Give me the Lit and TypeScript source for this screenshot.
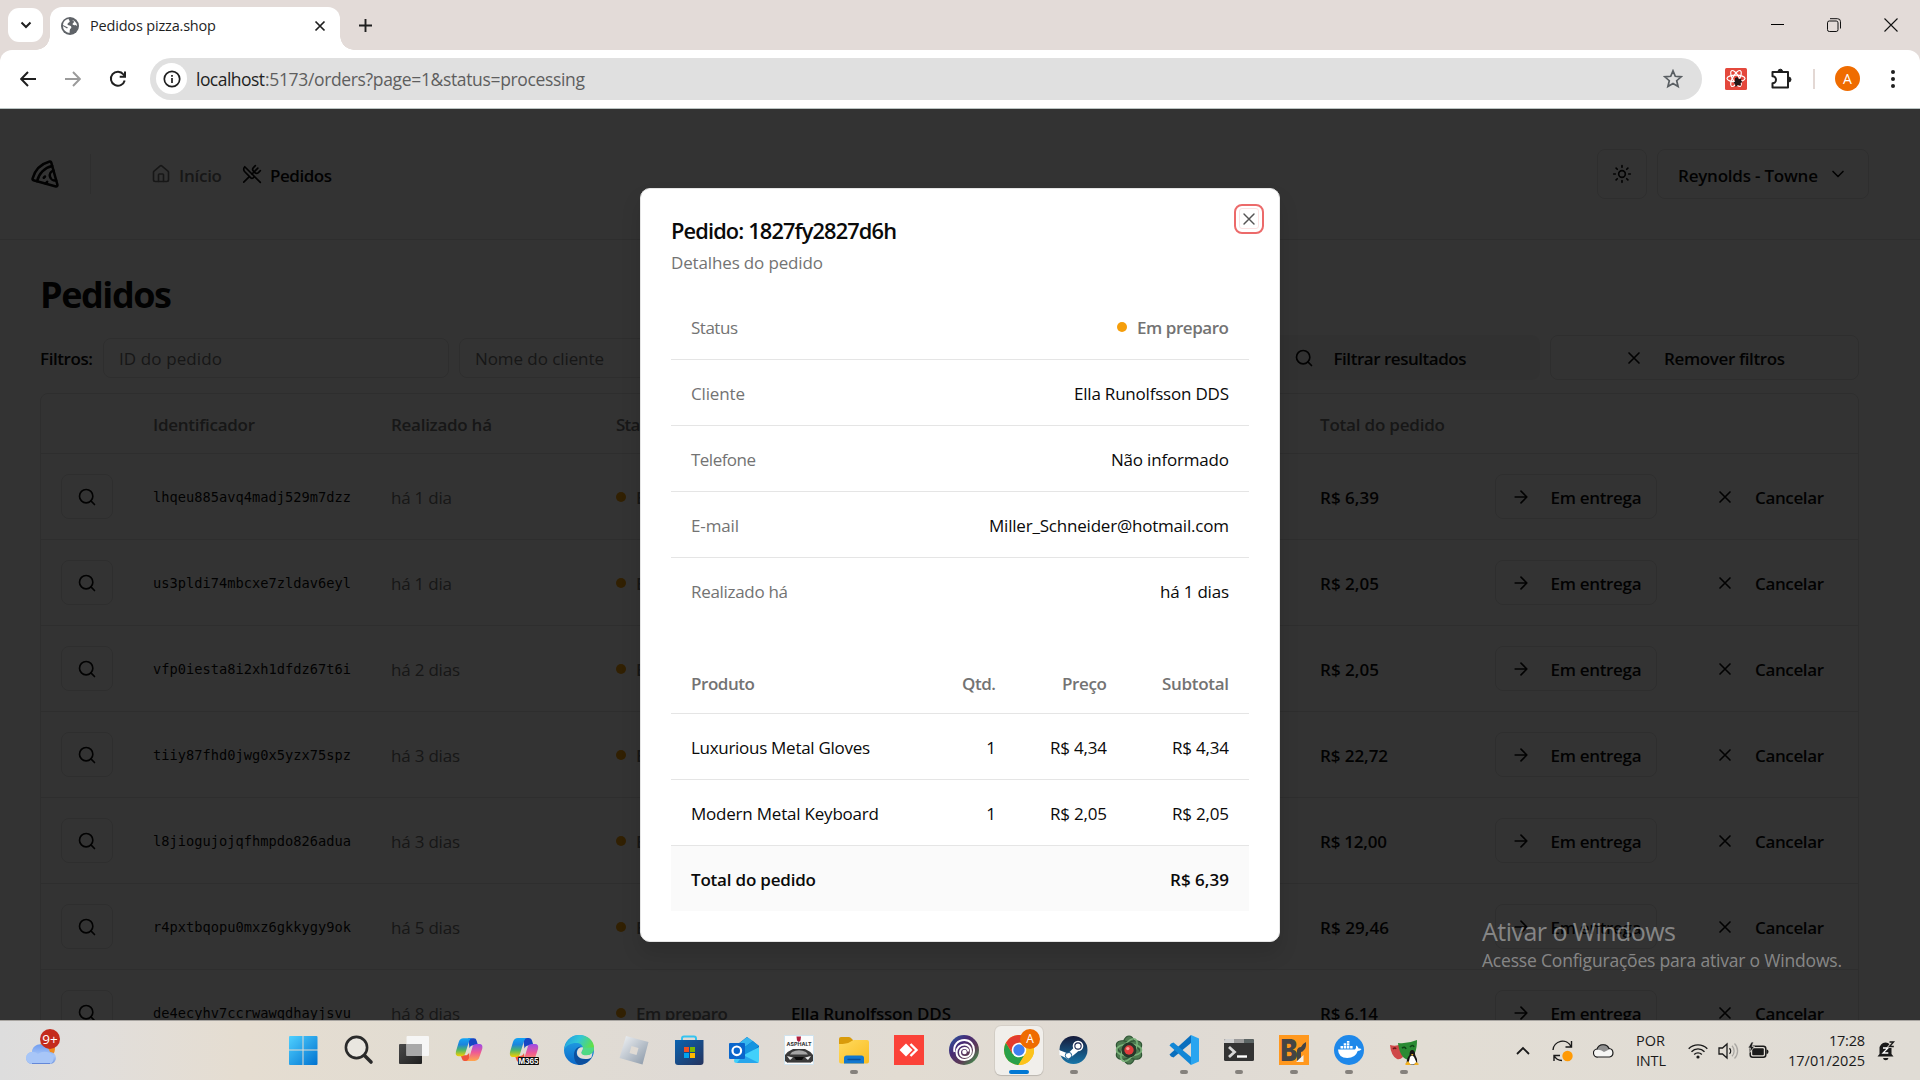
import { LitElement, html, css, svg, nothing } from "lit";
import type { TemplateResult } from "lit";
import { customElement, property, query } from "lit/decorators.js";

/** A line of text tracked so that it fills exactly `w` pixels. */
@customElement("fit-text")
class FitText extends LitElement {
  static styles = css`
    :host { display: inline-block; white-space: nowrap; padding-top: 1px; flex: none; }
  `;
  @property({ type: Number }) w = 0;
  @query("span") private line!: HTMLSpanElement;
  firstUpdated() {
    const n = (this.textContent ?? "").trim().length;
    const natural = this.line.getBoundingClientRect().width;
    if (this.w && n > 1) {
      this.line.style.letterSpacing = `${(this.w - natural) / (n - 1)}px`;
      this.style.width = `${this.w}px`;
    }
  }
  render() { return html`<span><slot></slot></span>`; }
}

const fit = (text: string, w: number, cls = "") => html`<fit-text class=${cls} .w=${w}>${text}</fit-text>`;

const lucide = (body: TemplateResult, size = 20, sw = 2) => html`<svg class="ic" width=${size} height=${size} viewBox="0 0 24 24" fill="none" stroke="currentColor" stroke-width=${sw} stroke-linecap="round" stroke-linejoin="round">${body}</svg>`;

const I = {
  pizza: svg`<path d="m12 14-1 1"/><path d="m13.75 18.25-1.25 1.42"/><path d="M17.775 5.654a15.68 15.68 0 0 0-12.121 12.12"/><path d="M18.8 9.3a1 1 0 0 0 2.1 7.7"/><path d="M21.964 20.732a1 1 0 0 1-1.232 1.232l-18-5a1 1 0 0 1-.695-1.232A19.68 19.68 0 0 1 15.732 2.037a1 1 0 0 1 1.232.695z"/>`,
  home: svg`<path d="M15 21v-8a1 1 0 0 0-1-1h-4a1 1 0 0 0-1 1v8"/><path d="M3 10a2 2 0 0 1 .709-1.528l7-5.999a2 2 0 0 1 2.582 0l7 5.999A2 2 0 0 1 21 10v9a2 2 0 0 1-2 2H5a2 2 0 0 1-2-2z"/>`,
  utensils: svg`<path d="m16 2-2.3 2.3a3 3 0 0 0 0 4.2l1.8 1.8a3 3 0 0 0 4.2 0L22 8"/><path d="M15 15 3.3 3.3a4.2 4.2 0 0 0 0 6l7.3 7.3c.7.7 2 .7 2.8 0L15 15Zm0 0 7 7"/><path d="m2.1 21.8 6.4-6.3"/><path d="m19 5-7 7"/>`,
  sun: svg`<circle cx="12" cy="12" r="4"/><path d="M12 2v2M12 20v2M4.93 4.93l1.41 1.41M17.66 17.66l1.41 1.41M2 12h2M20 12h2M6.34 17.66l-1.41 1.41M19.07 4.93l-1.41 1.41"/>`,
  down: svg`<path d="m6 9 6 6 6-6"/>`,
  search: svg`<circle cx="11" cy="11" r="8"/><path d="m21 21-4.3-4.3"/>`,
  x: svg`<path d="M18 6 6 18M6 6l12 12"/>`,
  arrow: svg`<path d="M5 12h14M12 5l7 7-7 7"/>`,
};

interface Order { id: string; ago: string; agoW: number; total: string; totalW: number }
const orders: Order[] = [
  { id: "lhqeu885avq4madj529m7dzz", ago: "há 1 dia", agoW: 61, total: "R$ 6,39", totalW: 59 },
  { id: "us3pldi74mbcxe7zldav6eyl", ago: "há 1 dia", agoW: 61, total: "R$ 2,05", totalW: 59 },
  { id: "vfp0iesta8i2xh1dfdz67t6i", ago: "há 2 dias", agoW: 69, total: "R$ 2,05", totalW: 59 },
  { id: "tiiy87fhd0jwg0x5yzx75spz", ago: "há 3 dias", agoW: 69, total: "R$ 22,72", totalW: 68 },
  { id: "l8jiogujojqfhmpdo826adua", ago: "há 3 dias", agoW: 69, total: "R$ 12,00", totalW: 67 },
  { id: "r4pxtbqopu0mxz6gkkygy9ok", ago: "há 5 dias", agoW: 69, total: "R$ 29,46", totalW: 69 },
  { id: "de4ecyhv7ccrwawqdhayjsvu", ago: "há 8 dias", agoW: 69, total: "R$ 6,14", totalW: 58 },
];

const details: [string, number, string, number][] = [
  ["Cliente", 54, "Ella Runolfsson DDS", 155],
  ["Telefone", 65, "Não informado", 118],
  ["E-mail", 48, "Miller_Schneider@hotmail.com", 240],
  ["Realizado há", 97, "há 1 dias", 69],
];
const products: [string, number, string][] = [
  ["Luxurious Metal Gloves", 179, "R$ 4,34"],
  ["Modern Metal Keyboard", 188, "R$ 2,05"],
];

const copilot = (id: string) => svg`
  <defs>
    <linearGradient id="${id}a" x1="0" y1="0" x2="0" y2="1"><stop offset="0" stop-color="#12a5f5"/><stop offset=".35" stop-color="#1c84dc"/><stop offset=".65" stop-color="#4fb568"/><stop offset="1" stop-color="#f5d000"/></linearGradient>
    <linearGradient id="${id}b" x1="0" y1="0" x2="0" y2="1"><stop offset="0" stop-color="#9a4be8"/><stop offset=".5" stop-color="#ee5a94"/><stop offset="1" stop-color="#ffa64d"/></linearGradient>
  </defs>
  <path d="M14 3h6q2.500 0 3 2.500l1.500 5h-5q-3 0-4 3z" fill="#1746c4"/>
  <path d="M16 27h-6q-2 0-2.500-2l-1.500-4h5q3 0 4-3z" fill="#f0543c"/>
  <path d="M9 3h9q-2 0-3 3l-4 13q-1 3-4 3H4q-4 0-3-5L4 7q1.200-4 5-4z" fill="url(#${id}a)"/>
  <path d="M21 27h-9q2 0 3-3l4-13q1-2 4-2h3q4 0 3 5l-3 9q-1.200 4-5 4z" fill="url(#${id}b)"/>`;

interface TaskIcon { art: TemplateResult; run?: boolean; active?: boolean }
const taskIcons: TaskIcon[] = [
  { art: svg`<defs><linearGradient id="wn" x1="0" y1="0" x2="1" y2="1"><stop offset="0" stop-color="#4fd0ff"/><stop offset="1" stop-color="#0072d0"/></linearGradient></defs><g transform="translate(-1.500 0)"><path fill="url(#wn)" d="M2.500 1H15v13.500H1.500V2q0-1 1-1zM16 1h13q1 0 1 1v12.500H16zM1.500 15.500H15V30H2.500q-1 0-1-1zM16 15.500h14V29q0 1-1 1H16z"/></g>` },
  { art: svg`<circle cx="12.500" cy="12.500" r="10.600" fill="#e9e6e0" stroke="#2a2a2a" stroke-width="2.600"/><path d="M20.500 20.500l6.500 6.500" stroke="#2a2a2a" stroke-width="3.600" stroke-linecap="round"/>` },
  { art: svg`<defs><linearGradient id="tv" x1="0" y1="0" x2="1" y2="1"><stop offset="0" stop-color="#4a4a4a"/><stop offset="1" stop-color="#1f1f1f"/></linearGradient></defs><rect x="0" y="9" width="23" height="20" rx="1" fill="url(#tv)"/><rect x="7.500" y="1" width="22.500" height="20" rx="1" fill="#f7f7f7" opacity=".92"/><rect x="7.500" y="9" width="15.500" height="12" fill="#a9a9a9"/>` },
  { art: svg`<g transform="translate(1 .5) scale(.94)">${copilot("cp")}</g>` },
  { art: svg`${copilot("cm")}<rect x="9" y="22" width="21" height="8" rx="1" fill="#0a0a0a"/><text x="19.500" y="28.600" text-anchor="middle" font-family="Inter" font-weight="700" font-size="7" fill="#fff">M365</text>` },
  { art: svg`<defs><linearGradient id="e1" x1="0" y1="0" x2="1" y2=".4"><stop offset="0" stop-color="#2198e0"/><stop offset=".5" stop-color="#30c5d8"/><stop offset="1" stop-color="#62e045"/></linearGradient><linearGradient id="e2" x1="0" y1="0" x2="0" y2="1"><stop offset="0" stop-color="#25a8e8"/><stop offset="1" stop-color="#0a67c8"/></linearGradient></defs><circle cx="15" cy="15" r="15" fill="url(#e2)"/><path d="M1 11C3 4 9 0 15 0c9 0 15 6 15 12.500C30 18 26 20 22.500 20c-3 0-5-1-5-2.500 0-1 1.500-1.500 1.500-4C19 10 16 8 12 8 7 8 2.500 10 0 15z" fill="url(#e1)"/><path d="M10 20c0-5 3-8 7-8.500-2.500 1.500-4.500 3-4.500 6 0 5 5.500 7 10 6.500 2.500-.3 4-1.200 5.500-2C25 27 20 30 15.500 30 12 29 10 25 10 20z" fill="#0c4f9e"/><path d="M19 12.500c.2 2.500-1.500 3.500-1.500 5 0 1.500 2 2.500 5 2.500 2.500 0 4.500-.8 6-2.500l-1 5c-4 2.500-12 2-14-2-1.800-4 1-9 5.500-8z" fill="#e2ddd5"/><path d="M19 13c.5 2.500-1.500 3.500-1.500 5 0 1.500 2 2.300 5 2.300 5 0 7.500-4 7.500-8z" fill="#4fd984"/>` },
  { art: svg`<defs><linearGradient id="rb" x1="0" y1="0" x2="1" y2="1"><stop offset="0" stop-color="#f3f5f7"/><stop offset="1" stop-color="#8795a5"/></linearGradient></defs><path fill="url(#rb)" fill-rule="evenodd" d="M7 1l22.500 6L23.500 29.500 .5 23zM12.500 11l-2 7 7 2 2-7z"/>` },
  { art: svg`<defs><linearGradient id="st" x1="0" y1="0" x2="1" y2="1"><stop offset="0" stop-color="#0b63b0"/><stop offset="1" stop-color="#25335e"/></linearGradient></defs><path d="M8 7V3.500q0-2 2-2h10q2 0 2 2V7" fill="none" stroke="#35c3f0" stroke-width="2"/><path d="M1 5h28.500v22q0 3-3 3H4q-3 0-3-3z" fill="url(#st)"/><path fill="#f25022" d="M10 12h5v5h-5z"/><path fill="#7fba00" d="M16 12h5v5h-5z"/><path fill="#00a4ef" d="M10 18h5v5h-5z"/><path fill="#ffb900" d="M16 18h5v5h-5z"/>` },
  { art: svg`<path d="M5 12L18 2l12 9v8L17 27z" fill="#0b5cb8"/><path d="M8 10L18 2l6 4-12 9z" fill="#35b5ee"/><path d="M13 14L24 6l6 5-13 10z" fill="#1494e0"/><path d="M6 20l7 1L30 12v13.500q0 2.500-2.500 2.500H7.500Q5 28 5 26z" fill="#42d0fa"/><path d="M14 20L30 28H8z" fill="#27a6ec"/><rect x="0" y="8" width="16" height="16" rx="1" fill="#0a66cc"/><circle cx="7.800" cy="15.800" r="4.300" fill="none" stroke="#fff" stroke-width="2.200"/>` },
  { art: svg`<path fill="#fcfcfc" stroke="#cfe3ee" d="M.5.500h29v29H.5z"/><path d="M12.500 1.500h4.500l-.5 4-1.700 1.500-1.800-1.500z" fill="#b01e3c"/><text x="15" y="11.300" text-anchor="middle" font-family="Inter" font-weight="700" font-size="5" textLength="25" lengthAdjust="spacingAndGlyphs" fill="#333">ASPHALT</text><path d="M1 20q3-4 8-6h12q5 2 8 6v6l-3 2H4l-3-2z" fill="#3a3a3a"/><path d="M8 17q7-3.500 14 0l2 2.500H6z" fill="#a5a5a5"/><path d="M3 21l6 1.500L6 25zM27 21l-6 1.500 3 2.500z" fill="#e8e8e8"/><path d="M10 22h10l-2 3h-6z" fill="#0a0a0a"/><path d="M4 27.500h22" stroke="#8a8a8a"/>` },
  { art: svg`<defs><linearGradient id="fo" x1="0" y1="0" x2="1" y2="1"><stop offset="0" stop-color="#ffda5e"/><stop offset="1" stop-color="#f9bd22"/></linearGradient></defs><path d="M0 4q0-2 2-2h8q1.500 0 2.500 1.500L14 5v6H0z" fill="#d99b0a"/><path d="M0 9q8 0 11-2t4-2h13q2 0 2 2v19.500q0 2-2 2H2q-2 0-2-2z" fill="url(#fo)"/><path d="M5 28.500V23q0-2.500 2.500-2.500h15Q25 20.500 25 23v5.500z" fill="#1177cf"/><path d="M9 24.500h12" stroke="#0a4f97" stroke-width="1.400" stroke-linecap="round"/>`, run: true },
  { art: svg`<path fill="#fb4238" d="M0 0h30v30H0z"/><path fill="#fff" d="M12 8.500l6.500 6.500-6.500 6.500L5.500 15z"/><path d="M16.500 9l6 6-6 6" fill="none" stroke="#fff" stroke-width="2.400"/>` },
  { art: svg`<defs><linearGradient id="ub" x1="0" y1="0" x2="1" y2="1"><stop offset="0" stop-color="#2460a8"/><stop offset=".35" stop-color="#472a75"/><stop offset=".65" stop-color="#5d3b55"/><stop offset="1" stop-color="#38b04a"/></linearGradient></defs><circle cx="15" cy="15" r="15" fill="url(#ub)"/><path d="M5.500 17C4 10 9 5 15.500 5 21 5 25 9.500 25 15c0 6-4.500 10-9.500 10-5 0-8-3.500-8-7.500 0-4.500 3.500-8 8-8 4 0 6.500 3 6.500 6.500s-2.500 6-6 6c-3 0-5-2-5-4.500s2-4.500 4.500-4.500 3.800 1.500 3.800 3.500" fill="none" stroke="#fff" stroke-width="2"/><circle cx="15.500" cy="17" r="2.300" fill="#fff"/>` },
  { art: svg`<circle cx="15" cy="15" r="15" fill="#fbc116"/><path d="M1.900 7.700A15 15 0 0 0 14.500 30L21.500 18.500 15 15 8.500 18.800z" fill="#29a049"/><path d="M15 7.500h13A15 15 0 0 1 14.500 30l7-11.500z" fill="#fcc31c"/><path d="M8.500 18.800L1.900 7.700A15 15 0 0 1 28 7.500H15z" fill="#e33b2e"/><circle cx="15" cy="15" r="7.300" fill="#fff"/><circle cx="15" cy="15" r="5.700" fill="#3f7ff0"/>`, run: true, active: true },
  { art: svg`<defs><linearGradient id="sm" x1="0" y1="0" x2="0" y2="1"><stop offset="0" stop-color="#161a3a"/><stop offset="1" stop-color="#1775a8"/></linearGradient></defs><circle cx="14.500" cy="15" r="14" fill="url(#sm)"/><path d="M0 15l9 3.500 6-6 4 4-6 5-4 3-4-2.500-4.500-2z" fill="#fff"/><circle cx="19" cy="11" r="5.300" fill="#fff"/><circle cx="19" cy="11" r="3.700" fill="#18254e"/><circle cx="19" cy="11" r="2.600" fill="#fff"/><circle cx="9.500" cy="20.500" r="3.200" fill="none" stroke="#1b5f90" stroke-width="1"/>`, run: true },
  { art: svg`<g fill="#4e7a50" stroke="#2f5535" stroke-width="1.200"><ellipse cx="15" cy="15" rx="7" ry="14"/><ellipse cx="15" cy="15" rx="7" ry="14" transform="rotate(60 15 15)"/><ellipse cx="15" cy="15" rx="7" ry="14" transform="rotate(120 15 15)"/></g><g fill="none" stroke="#79b279" stroke-width="1.500"><ellipse cx="15" cy="15" rx="6" ry="12.500" transform="rotate(30 15 15)"/><ellipse cx="15" cy="15" rx="6" ry="12.500" transform="rotate(90 15 15)"/></g><circle cx="15" cy="15" r="7.500" fill="#26382a"/><circle cx="15" cy="15" r="4.700" fill="#e03c3c"/><circle cx="13.800" cy="13.600" r="1.700" fill="#ff9c96"/>` },
  { art: svg`<path d="M22 0l8 3.500v23L22 30z" fill="#2aa5f0"/><path d="M22 0v8L4.500 22.500 2 21.500.500 19.500z" fill="#0a6fbe"/><path d="M22 30v-8L4.500 7.500 2 8.500.500 10.500z" fill="#1287d6"/>`, run: true },
  { art: svg`<rect x="0" y="4" width="30" height="22" rx="1.500" fill="#333"/><path d="M0 8V5.500Q0 4 1.500 4H10v4z" fill="#d0d0d0"/><path d="M10 4h10v4H10z" fill="#9a9a9a"/><path d="M20 4h8.500Q30 4 30 5.500V8H20z" fill="#5a6363"/><path d="M5 12l5.500 5L5 22" fill="none" stroke="#d8d8d8" stroke-width="2.800"/><path d="M13 21.500h10" stroke="#fff" stroke-width="2.400"/>`, run: true },
  { art: svg`<path fill="#ff981e" d="M0 0h30v30H0z"/><text x="1.500" y="26" font-family="Inter" font-weight="900" font-size="30" textLength="17" lengthAdjust="spacingAndGlyphs" fill="#454545">B</text><path d="M18 27V15q1-3 4-3 1-3 5-5 .5 6-2 8-1.500 2-3 2v10z" fill="#454545"/><path d="M17 27l7.500-7v7z" fill="#f3eee6"/>`, run: true },
  { art: svg`<circle cx="15" cy="15" r="15" fill="#1e88ea"/><path d="M4 14.500h17q1.500-1.500 1-4 2.200.8 2.600 3 2-.4 3 .5-1.300 2-3.900 2-2.200 7-10.500 7Q4.500 23 4 14.500z" fill="#fff"/><path d="M6.500 11h2.500v2.500H6.500zM9.700 11h2.500v2.500H9.700zM12.900 11h2.500v2.500h-2.500zM16.100 11h2.500v2.500h-2.500zM9.700 8.300h2.500v2.200H9.700zM12.900 8.300h2.500v2.200h-2.500zM12.900 6h2.500v1.800h-2.500z" fill="#fff"/>`, run: true },
  { art: svg`<path d="M1 10q6 2 11-1l2 13q-3 3-6 2-6-3-7-14z" fill="#cf4848"/><path d="M9 8q10 1 19-3 0 16-8 20-9-1-11-17z" fill="#2a8a33"/><path d="M13 13q3-2 4 1M21 12q3-3 4 0" stroke="#0e4416" stroke-width="1.600" fill="none"/><path d="M4 14q2-2 3 0" stroke="#6d1616" stroke-width="1.600" fill="none"/><path d="M20.500 20q0-5 2.700-5t3 5q2.500 4 2 8l-3.500 2h-4l-3-2q0-5 2.800-8z" fill="#141414"/><path d="M21 22q2-3 4 0l2.500 5.500-3 2h-3.500L19.500 28z" fill="#fff"/><path d="M16 29l3-3 3 4h-5zM30 29l-3-2-2 3h4z" fill="#f2b01e"/><path d="M22 19h2.500l-1.200 1.700z" fill="#f2b01e"/>`, run: true },
];

@customElement("app-root")
class AppRoot extends LitElement {
  static styles = css`
    :host { display: block; width: 1920px; height: 1080px; overflow: hidden; font-family: "Open Sans", "Noto Sans", sans-serif; font-size: 17px; line-height: 25px; color: #0a0a0a; }
    * { box-sizing: border-box; }
    svg { display: block; flex: none; }
    .window { display: flex; flex-direction: column; width: 1920px; height: 1080px; position: relative; background: #e3dbd8; }
    .mid { display: flex; align-items: center; justify-content: center; }

    /* browser chrome */
    .tabs { height: 50px; display: flex; align-items: flex-start; padding: 8px 0 0 8px; color: #1f1f1f; flex: none; }
    .tab-search { width: 35px; height: 34px; border-radius: 11px; background: #fff; }
    .tab { position: relative; margin: -1px 0 0 7px; width: 290px; height: 43px; background: #fff; border-radius: 12px 12px 0 0; display: flex; align-items: center; padding: 0 14px 6px 11px; font-size: 14.5px; }
    .tab::before, .tab::after { content: ""; position: absolute; bottom: 0; width: 14px; height: 14px; }
    .tab::before { left: -14px; background: radial-gradient(circle at 0 0, transparent 13.500px, #fff 14px); }
    .tab::after { right: -14px; background: radial-gradient(circle at 100% 0, transparent 13.500px, #fff 14px); }
    .tab fit-text { margin-left: 11px; padding-top: 0; }
    .tab .x { margin-left: auto; }
    .newtab { margin: 10px 0 0 18px; }
    .controls { margin-left: auto; display: flex; padding-right: 1px; }
    .controls .mid { width: 57px; height: 34px; }
    .controls .mid:first-child { padding-left: 2px; }
    .bar { height: 59px; flex: none; background: #fff; border-radius: 12px 12px 0 0; border-bottom: 1px solid #b9c3c2; display: flex; align-items: center; padding: 0 5px 1px; }
    .bar .mid { width: 45px; height: 42px; color: #1f1f1f; }
    .bar .off { color: #9b9b9b; }
    .addr { width: 1552px; height: 42px; margin: 0 11px 0 10px; border-radius: 21px; background: #e0e0e0; display: flex; align-items: center; padding: 0 19px 0 6px; color: #5e5e5e; font-size: 17.5px; }
    .addr .info { width: 31px; height: 31px; border-radius: 50%; background: #fff; margin-right: 9px; color: #1f1f1f; }
    .addr .host { color: #1f1f1f; }
    .addr .star { margin-left: auto; }
    .bar .sep { width: 22px; }
    .sep i { width: 2px; height: 20px; background: #e3d8d4; }
    .avatar { width: 25px; height: 25px; border-radius: 50%; background: #ef6c00; color: #fff; font-size: 14px; line-height: 25px; text-align: center; }

    /* application */
    .page { height: 911px; flex: none; position: relative; overflow: hidden; background: #fff; }
    .head { height: 131px; border-bottom: 1px solid #e5e5e5; display: flex; align-items: center; padding: 0 51px 0 30px; font-weight: 600; }
    .head fit-text { padding-top: 3px; }
    .head .rule { width: 1px; height: 40px; background: #e5e5e5; margin: 0 60px 0 30px; }
    .head nav { display: flex; align-items: center; }
    .head nav .ic { margin-right: 8px; }
    .muted { color: #737373; }
    .home { display: flex; align-items: center; margin-right: 20px; }
    .link { display: flex; align-items: center; }
    .right { margin-left: auto; display: flex; gap: 10px; }
    .btn { border: 1px solid #e5e5e5; border-radius: 8px; display: flex; align-items: center; justify-content: center; font-weight: 600; gap: 20px; height: 45px; }
    .theme { width: 50px; height: 50px; }
    .account { width: 212px; height: 50px; gap: 10px; }
    .main { padding: 31px 61px 0 40px; }
    h1 { margin: 0; font-size: 36px; line-height: 45px; height: 45px; font-weight: 700; }
    .filters { margin-top: 19px; height: 45px; display: flex; align-items: center; gap: 10px; }
    .filters .label { font-weight: 600; }
    .input { height: 40px; border: 1px solid #e5e5e5; border-radius: 8px; padding: 0 15px; display: flex; align-items: center; color: #737373; }
    .w1 { width: 346px; }
    .w2 { width: 400px; }
    .grow { flex: 1; }
    .apply { width: 318px; background: #f5f5f5; border-color: #f5f5f5; padding-right: 2px; }
    .remove { width: 309px; }
    .table { margin-top: 13px; border: 1px solid #e5e5e5; border-radius: 8px; }
    .row { display: grid; grid-template-columns: 92px 238px 225px 175px 529px 175px 202px 1fr; height: 86px; align-items: center; border-bottom: 1px solid #e5e5e5; font-weight: 600; }
    .row > div { padding-left: 20px; display: flex; align-items: center; }
    .row.top { height: 60px; color: #737373; }
    .row .look { width: 52px; }
    .row .go { width: 162px; }
    .row .cancel { padding-left: 38px; gap: 20px; }
    .thin { font-weight: 400; }
    .mono { font-family: "DejaVu Sans Mono", monospace; font-size: 13.700px; font-weight: 400; }
    .dot { width: 10px; height: 10px; border-radius: 50%; background: #f59e0b; margin-right: 10px; flex: none; }

    .overlay { position: absolute; inset: 0; background: rgba(0, 0, 0, .8); display: flex; align-items: center; justify-content: center; }
    .modal { position: relative; width: 640px; height: 754px; background: #fff; border: 1px solid #e5e5e5; border-radius: 10px; box-shadow: 0 12px 20px rgba(0, 0, 0, .12); padding: 28px 30px 0; }
    .modal h2 { margin: 0; font-size: 21.800px; line-height: 26px; font-weight: 600; height: 27px; }
    .sub { margin-top: 5px; height: 25px; }
    .close { position: absolute; top: 15px; right: 15px; width: 30px; height: 30px; border: 2.500px solid #ec6a6a; border-radius: 8px; display: flex; align-items: center; justify-content: center; color: #555; }
    .close span { width: 20px; height: 21px; border: 1px solid #fbe3e3; border-radius: 3px; display: flex; align-items: center; justify-content: center; }
    .list { margin-top: 20px; }
    .kv { display: flex; justify-content: space-between; align-items: center; height: 66px; padding: 2px 20px 0; border-bottom: 1px solid #e5e5e5; }
    .kv:last-child { border-bottom-color: transparent; }
    .kv b { display: flex; align-items: center; font-weight: 600; }
    .items { margin-top: 30px; }
    .item { display: grid; grid-template-columns: 1fr 60px 111px 122px; align-items: center; height: 66px; padding: 2px 20px 0; border-bottom: 1px solid #e5e5e5; justify-items: end; }
    .item :first-child { justify-self: start; }
    .item.hd { height: 60px; font-weight: 600; color: #737373; padding-top: 0; }
    .item.ft { font-weight: 600; background: #fafafa; border: 0; grid-template-columns: 1fr auto; height: 65px; }

    .watermark { position: absolute; left: 1482px; top: 912px; color: rgba(255, 255, 255, .42); display: flex; flex-direction: column; }
    .watermark .l1 { font-size: 25px; line-height: 36px; }
    .watermark .l2 { font-size: 17.500px; line-height: 28px; margin-top: -4px; }

    /* taskbar */
    .taskbar { height: 60px; flex: none; border-top: 1px solid #a8a5a1; background: linear-gradient(90deg, #dddddd 0, #e1dedb 90px, #e5ddd1 240px, #e1dcd2 480px, #dfdad5 700px, #e2dcd2 900px, #dfdad4 1150px, #e2ddd4 1400px, #e0dcd5 1920px); display: flex; position: relative; color: #1a1a1a; font-size: 14.500px; }
    .weather { padding: 6px 0 0 24px; width: 280px; }
    .apps { display: flex; gap: 7px; padding: 5px 0 0; }
    .app { width: 48px; height: 49px; display: flex; flex-direction: column; align-items: center; padding-top: 9px; border-radius: 6px; position: relative; }
    .app.active { background: #f1efeb; box-shadow: 0 0 0 1px rgba(0, 0, 0, .05), 0 1px 1px rgba(0, 0, 0, .12); }
    .app i { margin-top: 5px; width: 8px; height: 4px; border-radius: 2px; background: #85817c; }
    .app.active i { width: 20px; background: #0078d4; }
    .app .who { position: absolute; left: 25px; top: 3px; width: 20px; height: 20px; border-radius: 50%; background: #ef6c00; color: #fff; font-size: 12px; line-height: 20px; text-align: center; }
    .tray { margin-left: auto; display: flex; padding-right: 24px; height: 59px; align-items: center; }
    .tray .txt { display: flex; flex-direction: column; line-height: 19.500px; }
    .tray .txt fit-text { padding-top: 0; }
    .tray .up { margin-right: 21px; }
    .tray .sync { margin-right: 18px; }
    .tray .cloud { margin-right: 22px; }
    .tray .lang { margin-right: 22px; }
    .tray .wifi { margin-right: 10px; }
    .tray .sound { margin-right: 9px; }
    .tray .power { margin-right: 19px; }
    .tray .clock { margin-right: 12px; align-items: flex-end; }
  `;

  private chrome() {
    return html`
      <div class="tabs">
        <div class="tab-search mid"><svg width="12" height="12" viewBox="0 0 12 12" fill="none" stroke="#1f1f1f" stroke-width="2"><path d="M1.500 3.500L6 8l4.500-4.500"/></svg></div>
        <div class="tab">
          <svg width="18" height="18" viewBox="0 0 18 18"><circle cx="9" cy="9" r="9" fill="#5f6368"/><path d="M8 1.800c-1 1.500 1.500 1.600.5 3.200-.8 1-2 .8-2 2.200 0 1.500 3.500.6 3.800 2.800.3 1.600-1.300 1.500-1.500 3L8.500 16A7.200 7.200 0 0 1 1.900 9L6 11.500l1-1L1.900 8A7.200 7.200 0 0 1 8 1.800zM11 3l2 1.500c0 1.500-1.500 1.500-1.500 2.500s1.500 1.500 3 1l1.700 1A7.200 7.200 0 0 0 11 3z" fill="#fff"/></svg>
          ${fit("Pedidos pizza.shop", 126)}
          <svg class="x" width="12" height="12" viewBox="0 0 12 12" stroke="#1f1f1f" stroke-width="1.700"><path d="M1.500 1.500l9 9M10.500 1.500l-9 9"/></svg>
        </div>
        <svg class="newtab" width="15" height="15" viewBox="0 0 15 15" stroke="#1f1f1f" stroke-width="1.900"><path d="M7.500 1v13M1 7.500h13"/></svg>
        <div class="controls">
          <div class="mid"><svg width="13" height="14" viewBox="0 0 13 14" stroke="#000"><path d="M0 6.500h13"/></svg></div>
          <div class="mid"><svg width="14" height="14" viewBox="0 0 14 14" fill="none" stroke="#111"><rect x=".5" y="3" width="10.500" height="10.500" rx="1.800"/><path d="M3 .7h7.500q3 0 3 3V10.500"/></svg></div>
          <div class="mid"><svg width="14" height="14" viewBox="0 0 14 14" stroke="#111" stroke-width="1.100"><path d="M.5.500l13 13M13.500.500l-13 13"/></svg></div>
        </div>
      </div>
      <div class="bar">
        <div class="mid"><svg width="16" height="16" viewBox="0 0 16 16" fill="none" stroke="currentColor" stroke-width="2"><path d="M16 8H1.500M8 1L1.200 8 8 15"/></svg></div>
        <div class="mid off"><svg width="16" height="16" viewBox="0 0 16 16" fill="none" stroke="currentColor" stroke-width="1.900"><path d="M0 8h14.500M8 1l6.800 7L8 15"/></svg></div>
        <div class="mid"><svg width="18" height="18" viewBox="0 0 18 18" fill="none" stroke="currentColor" stroke-width="2"><path d="M15.700 10.500A7 7 0 1 1 14.500 4.500L16 6.200"/><path d="M16 1.500v5.300h-5.300"/></svg></div>
        <div class="addr">
          <div class="info mid"><svg width="18" height="18" viewBox="0 0 18 18" fill="none" stroke="currentColor" stroke-width="1.700"><circle cx="9" cy="9" r="7.700"/><path d="M9 8v5M9 5v1.800"/></svg></div>
          ${fit("localhost", 69, "host")}${fit(":5173/orders?page=1&status=processing", 320)}
          <svg class="star" width="20" height="20" viewBox="0 0 20 20" fill="none" stroke="#5a5f63" stroke-width="1.700"><path d="M10 1.800l2.300 5.500 5.900.5-4.500 3.900 1.400 5.800L10 14.400l-5.100 3.100 1.400-5.800L1.800 7.800l5.900-.5z"/></svg>
        </div>
        <div class="mid"><svg width="22" height="22" viewBox="0 0 22 22"><rect width="22" height="22" rx="1.500" fill="#e4483c"/><g fill="none" stroke="#fff" stroke-width="1.200"><ellipse cx="11" cy="10.500" rx="9" ry="3.300"/><ellipse cx="11" cy="10.500" rx="9" ry="3.300" transform="rotate(60 11 10.500)"/><ellipse cx="11" cy="10.500" rx="9" ry="3.300" transform="rotate(120 11 10.500)"/></g><path d="M10 10l2.500-1 1 2 3-.5-.5 2 1.500 1.500-2 1 .5 2.500-3-.5-2.500 2-.5-3-1.500-1.500 1.500-1z" fill="#201818"/></svg></div>
        <div class="mid"><svg width="22" height="24" viewBox="0 0 22 24" fill="none" stroke="#1f1f1f" stroke-width="2" stroke-linejoin="round"><path d="M2.500 5h15.500v15.500H2.500v-4.200a3.500 3.500 0 0 0 0-7z"/><path d="M8 4.500a2.300 2.300 0 0 1 4.600 0zM18.500 10a2.300 2.300 0 0 1 0 5z" fill="#1f1f1f" stroke-width="1"/></svg></div>
        <div class="mid sep"><i></i></div>
        <div class="mid"><div class="avatar">A</div></div>
        <div class="mid"><svg width="6" height="20" viewBox="0 0 6 20" fill="#1f1f1f"><circle cx="3" cy="3" r="2"/><circle cx="3" cy="10" r="2"/><circle cx="3" cy="17" r="2"/></svg></div>
      </div>`;
  }

  private orderRow(o: Order) {
    return html`<div class="row">
      <div><span class="btn look">${lucide(I.search)}</span></div>
      <div>${fit(o.id, 198, "mono")}</div>
      <div>${fit(o.ago, o.agoW, "thin muted")}</div>
      <div><i class="dot"></i>${fit("Em preparo", 92, "muted")}</div>
      <div>${fit("Ella Runolfsson DDS", 160)}</div>
      <div>${fit(o.total, o.totalW)}</div>
      <div><span class="btn go">${lucide(I.arrow)}${fit("Em entrega", 91)}</span></div>
      <div class="cancel">${lucide(I.x)}${fit("Cancelar", 69)}</div>
    </div>`;
  }

  private modal() {
    return html`<div class="modal">
      <h2>${fit("Pedido: 1827fy2827d6h", 226)}</h2>
      <div class="sub muted">${fit("Detalhes do pedido", 152)}</div>
      <div class="close"><span>${lucide(I.x, 20, 1.700)}</span></div>
      <div class="list">
        <div class="kv">${fit("Status", 47, "muted")}<b class="muted"><i class="dot"></i>${fit("Em preparo", 92)}</b></div>
        ${details.map(([k, kw, v, vw]) => html`<div class="kv">${fit(k, kw, "muted")}${fit(v, vw)}</div>`)}
      </div>
      <div class="items">
        <div class="item hd">${fit("Produto", 64)}${fit("Qtd.", 34)}${fit("Preço", 45)}${fit("Subtotal", 67)}</div>
        ${products.map(([n, w, p]) => html`<div class="item">${fit(n, w)}<fit-text>1</fit-text>${fit(p, 57)}${fit(p, 57)}</div>`)}
        <div class="item ft">${fit("Total do pedido", 125)}${fit("R$ 6,39", 59)}</div>
      </div>
    </div>`;
  }

  private taskbar() {
    return html`<div class="taskbar">
      <div class="weather"><svg width="38" height="40" viewBox="0 0 38 40"><defs><linearGradient id="cl" x1="0" y1="0" x2="0" y2="1"><stop offset="0" stop-color="#6f9cf0"/><stop offset=".6" stop-color="#a9c8f8"/><stop offset="1" stop-color="#7297e0"/></linearGradient></defs><circle cx="23" cy="22" r="8" fill="#f08a1d"/><path d="M8 37a6 6 0 0 1 0-12 8 8 0 0 1 14-5 7 7 0 0 1 4 5 6 6 0 0 1 0 12z" fill="url(#cl)"/><path d="M8 37a6 6 0 0 1 0-12q4-.5 6 2 5-4 12-1a6 6 0 0 1 0 11z" fill="#a8c6f7"/><path d="M8 36.500h18" stroke="#6488d8"/><circle cx="26" cy="12" r="10" fill="#c42b1c"/><text x="26" y="17" text-anchor="middle" font-family="Open Sans" font-size="13.500" fill="#fff">9+</text></svg></div>
      <div class="apps">${taskIcons.map((t) => html`<div class="app ${t.active ? "active" : ""}"><svg width="30" height="30" viewBox="0 0 30 30">${t.art}</svg>${t.run ? html`<i></i>` : nothing}${t.active ? html`<span class="who">A</span>` : nothing}</div>`)}</div>
      <div class="tray">
        <svg class="up" width="14" height="10" viewBox="0 0 14 10" fill="none" stroke="#1a1a1a" stroke-width="1.800"><path d="M1 8l6-6 6 6"/></svg>
        <svg class="sync" width="24" height="24" viewBox="0 0 24 24" fill="none" stroke="#1a1a1a" stroke-width="1.400"><path d="M2 11A9.500 9.500 0 0 1 20 7.500M20.500 2v6h-6M3 22v-5.500h6M3 16.500a9 9 0 0 0 8 5"/><circle cx="16.500" cy="17" r="5.200" fill="#ff9a05" stroke="none"/></svg>
        <svg class="cloud" width="21" height="15" viewBox="0 0 21 15"><path d="M5 14a4 4 0 0 1-1-8 6.500 6.500 0 0 1 12-.500 4.300 4.300 0 0 1 .5 8.500z" fill="#f6f6f4"/><path d="M3 7q4-1 8 2l6-3q-2-5-6.500-5Q5 1 4 6z" fill="#909090"/><path d="M5 14a4 4 0 0 1-1-8 6.500 6.500 0 0 1 12-.500 4.300 4.300 0 0 1 .5 8.500z" fill="none" stroke="#1a1a1a" stroke-width="1.200"/></svg>
        <div class="txt lang">${fit("POR", 29)}${fit("INTL", 30)}</div>
        <svg class="wifi" width="20" height="16" viewBox="0 0 20 16" fill="none" stroke="#1a1a1a" stroke-width="1.400"><path d="M.7 5.800a13 13 0 0 1 18.600 0M3.500 8.700a9 9 0 0 1 13 0M6.200 11.500a5.300 5.300 0 0 1 7.600 0"/><circle cx="10" cy="14" r="1.600" fill="#1a1a1a" stroke="none"/></svg>
        <svg class="sound" width="21" height="18" viewBox="0 0 21 18" fill="none" stroke="#1a1a1a" stroke-width="1.300"><path d="M1 6h3.500L9 2v14l-4.500-4H1zM11.500 6.200a4 4 0 0 1 0 5.600"/><path d="M14 3.800a7.500 7.500 0 0 1 0 10.400M16.500 1.500a10.700 10.700 0 0 1 0 15" stroke="#aaa7a3"/></svg>
        <svg class="power" width="21" height="17" viewBox="0 0 21 17"><rect x="2.200" y="4.200" width="15.600" height="11" rx="2.500" fill="none" stroke="#1a1a1a" stroke-width="1.500"/><rect x="4.200" y="6.200" width="11.600" height="7" rx="1" fill="#1a1a1a"/><path d="M18.500 7.500q2 0 2 2.200t-2 2.200z" fill="#1a1a1a"/><path d="M3.500 0L0 6h2.500L1.800 10.500 6.500 4.500H4L5.500 0z" fill="#1a1a1a" stroke="#e0dcd5" stroke-width=".7"/></svg>
        <div class="txt clock">${fit("17:28", 36)}${fit("17/01/2025", 77)}</div>
        <svg width="19" height="22" viewBox="0 0 19 22"><path d="M2.500 14V9a6 6 0 0 1 6-6.500 6 6 0 0 1 6 6.500v5l2 2.500H.5zM6 18h5.500a2.800 2.800 0 0 1-5.500 0z" fill="#1a1a1a"/><path d="M6 8h5l-5 5h5.300" fill="none" stroke="#fff" stroke-width="1.300"/><path d="M12.500 2h4l-4 4.500h4.300" fill="none" stroke="#e0dcd5" stroke-width="3"/><path d="M12.500 2h4l-4 4.500h4.300" fill="none" stroke="#1a1a1a" stroke-width="1.400"/></svg>
      </div>
    </div>`;
  }

  render() {
    return html`<div class="window">
      ${this.chrome()}
      <div class="page">
        <div class="head">
          ${lucide(I.pizza, 30)}
          <span class="rule"></span>
          <nav>
            <span class="home muted">${lucide(I.home)}${fit("Início", 43)}</span>
            <span class="link">${lucide(I.utensils)}${fit("Pedidos", 62)}</span>
          </nav>
          <div class="right">
            <span class="btn theme">${lucide(I.sun)}</span>
            <span class="btn account">${fit("Reynolds - Towne", 140)}${lucide(I.down)}</span>
          </div>
        </div>
        <div class="main">
          <h1>${fit("Pedidos", 132)}</h1>
          <div class="filters">
            ${fit("Filtros:", 53, "label")}
            <span class="input w1">${fit("ID do pedido", 103)}</span>
            <span class="input w2">${fit("Nome do cliente", 129)}</span>
            <span class="input grow"></span>
            <span class="btn apply">${lucide(I.search)}${fit("Filtrar resultados", 133)}</span>
            <span class="btn remove">${lucide(I.x)}${fit("Remover filtros", 121)}</span>
          </div>
          <div class="table">
            <div class="row top">
              <div></div><div>${fit("Identificador", 102)}</div><div>${fit("Realizado há", 101)}</div><div>${fit("Status", 48)}</div>
              <div>${fit("Cliente", 55)}</div><div>${fit("Total do pedido", 125)}</div><div></div><div></div>
            </div>
            ${orders.map((o) => this.orderRow(o))}
          </div>
        </div>
        <div class="overlay">${this.modal()}</div>
      </div>
      ${this.taskbar()}
      <div class="watermark">
        ${fit("Ativar o Windows", 194, "l1")}
        ${fit("Acesse Configurações para ativar o Windows.", 360, "l2")}
      </div>
    </div>`;
  }
}
